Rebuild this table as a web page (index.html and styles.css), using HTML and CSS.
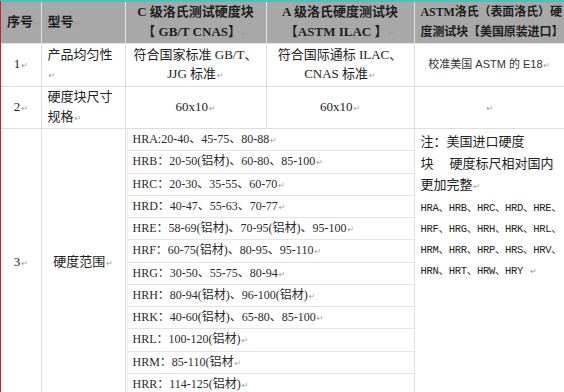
FILE: index.html
```html
<!DOCTYPE html>
<html lang="zh">
<head>
<meta charset="utf-8">
<title>硬度块对比</title>
<link rel="stylesheet" href="styles.css">
</head>
<body>
<div class="sheet">
  <table class="grid">
    <colgroup>
      <col class="c1"><col class="c2"><col class="c3"><col class="c4"><col class="c5">
    </colgroup>
    <thead>
      <tr class="head">
        <th class="center">序号<span class="pm">↵</span></th>
        <th class="left">型号<span class="pm">↵</span></th>
        <th class="center">C 级洛氏测试硬度块<br>【 GB/T CNAS】<span class="pm">↵</span></th>
        <th class="center">A 级洛氏硬度测试块<br>【ASTM ILAC 】<span class="pm">↵</span></th>
        <th class="left nowrap last-head">ASTM洛氏（表面洛氏）硬<br>度测试块【美国原装进口】</th>
      </tr>
    </thead>
    <tbody>
      <tr class="r1">
        <td class="center">1<span class="pm">↵</span></td>
        <td class="left">产品均匀性<span class="pm">↵</span></td>
        <td class="center">符合国家标准 GB/T、<br>JJG 标准<span class="pm">↵</span></td>
        <td class="center">符合国际通标 ILAC、<br>CNAS 标准<span class="pm">↵</span></td>
        <td class="center sans">校准美国 ASTM 的 E18<span class="pm">↵</span></td>
      </tr>
      <tr class="r2">
        <td class="center">2<span class="pm">↵</span></td>
        <td class="left">硬度块尺寸<br>规格<span class="pm">↵</span></td>
        <td class="center">60x10<span class="pm">↵</span></td>
        <td class="center">60x10<span class="pm">↵</span></td>
        <td class="center"><span class="pm">↵</span></td>
      </tr>
      <tr class="r3">
        <td class="center">3<span class="pm">↵</span></td>
        <td class="center">硬度范围<span class="pm">↵</span></td>
        <td class="ranges-cell" colspan="2">
          <div class="ranges">
            <div class="rg">HRA:20-40、45-75、80-88<span class="pm">↵</span></div>
            <div class="rg">HRB：20-50(铝材)、60-80、85-100<span class="pm">↵</span></div>
            <div class="rg">HRC：20-30、35-55、60-70<span class="pm">↵</span></div>
            <div class="rg">HRD：40-47、55-63、70-77<span class="pm">↵</span></div>
            <div class="rg">HRE：58-69(铝材)、70-95(铝材)、95-100<span class="pm">↵</span></div>
            <div class="rg">HRF：60-75(铝材)、80-95、95-110<span class="pm">↵</span></div>
            <div class="rg">HRG：30-50、55-75、80-94<span class="pm">↵</span></div>
            <div class="rg">HRH：80-94(铝材)、96-100(铝材)<span class="pm">↵</span></div>
            <div class="rg">HRK：40-60(铝材)、65-80、85-100<span class="pm">↵</span></div>
            <div class="rg">HRL：100-120(铝材)<span class="pm">↵</span></div>
            <div class="rg">HRM：85-110(铝材<span class="pm">↵</span></div>
            <div class="rg">HRR：114-125(铝材)<span class="pm">↵</span></div>
          </div>
        </td>
        <td class="note">
          <div class="note-text">注：美国进口硬度<br>块　 硬度标尺相对国内<br>更加完整<span class="pm">↵</span></div>
          <div class="scales">HRA、HRB、HRC、HRD、HRE、<br>HRF、HRG、HRH、HRK、HRL、<br>HRM、HRR、HRP、HRS、HRV、<br>HRN、HRT、HRW、HRY <span class="pm">↵</span></div>
        </td>
      </tr>
    </tbody>
  </table>
</div>
</body>
</html>
```

FILE: styles.css
```css
html, body {
  margin: 0;
  padding: 0;
  overflow: hidden;
  background: #ffffff;
}

.sheet {
  border-top: 2px solid #3fc6bf;
  border-left: 1px solid #cc1f2f;
  min-height: 390px;
}

.grid {
  border-collapse: collapse;
  table-layout: fixed;
  width: 563px;
  font-family: "Liberation Serif", "Noto Sans CJK SC", serif;
  font-size: 13px;
  color: #222;
}

.c1 { width: 40px; }
.c2 { width: 84px; }
.c3 { width: 141px; }
.c4 { width: 148px; }
.c5 { width: 150px; }

.grid th,
.grid td {
  border: 1px solid #dedede;
  padding: 0 6px;
  vertical-align: middle;
  line-height: 20px;
}

.grid tr > :first-child { border-left: none; }
.grid tr > :last-child { border-right: none; }

.head th {
  background: #a8a8a8;
  border-color: #e2e2e2;
  border-top: none;
  height: 40px;
  font-weight: bold;
  color: #1e1e1e;
  font-size: 13px;
  line-height: 19.5px;
  white-space: nowrap;
  overflow: hidden;
}

.head th.last-head {
  font-size: 12px;
  padding: 0 0 0 6px;
  letter-spacing: -0.1px;
}

.center { text-align: center; }
.left { text-align: left; }
.nowrap { white-space: nowrap; }

.pm {
  font-family: "DejaVu Sans", sans-serif;
  font-size: 8px;
  color: #9a9a9a;
  font-weight: normal;
  margin-left: 1px;
}

.r1 td { height: 42px; line-height: 19.5px; }
.r2 td { height: 41px; line-height: 19.5px; }

.sans {
  font-family: "Liberation Sans", "Noto Sans CJK SC", sans-serif;
  font-size: 11px;
  color: #333;
}

.r3 td { height: 264px; }

.ranges-cell {
  padding: 0 0 0 1px !important;
  vertical-align: top !important;
}

.ranges {
  display: flex;
  flex-direction: column;
}

.rg {
  box-sizing: border-box;
  height: 22.27px;
  border-bottom: 1px solid #e4e4e4;
  border-left: 1px solid #eeeeee;
  padding-left: 5px;
  font-size: 12px;
  line-height: 21px;
  white-space: nowrap;
  overflow: hidden;
  color: #2a2a2a;
}

.grid td.note {
  vertical-align: top;
  padding: 1px 0 0 6px;
  white-space: nowrap;
  overflow: hidden;
}

.note-text {
  font-family: "Noto Sans CJK SC", sans-serif;
  font-size: 13px;
  line-height: 21.5px;
  color: #222;
}

.scales {
  font-family: "Liberation Mono", "Noto Sans CJK SC", monospace;
  font-size: 10.5px;
  line-height: 21px;
  color: #222;
  letter-spacing: -0.3px;
}
```
